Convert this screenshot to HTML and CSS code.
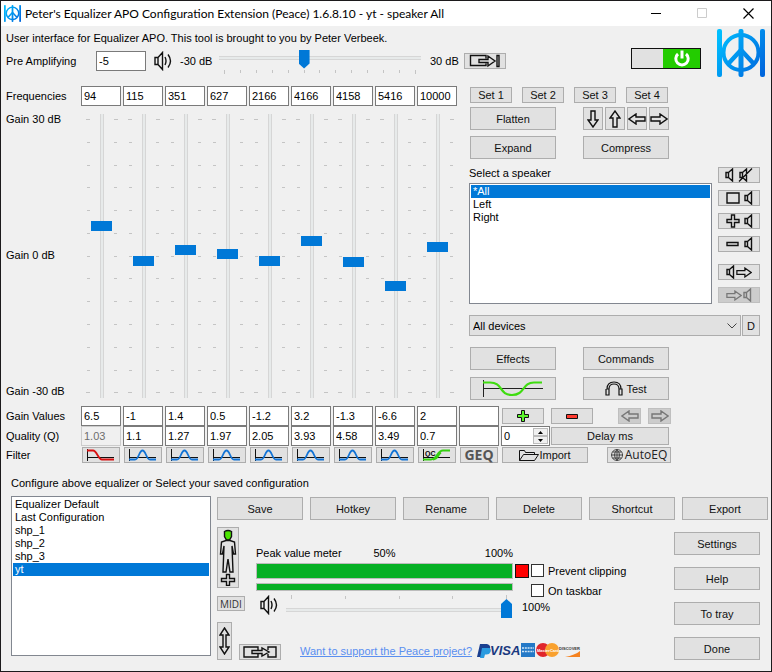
FILE: index.html
```html
<!DOCTYPE html>
<html lang="en">
<head>
    <meta charset="utf-8">
    <title>Peter's Equalizer APO Configuration Extension (Peace)</title>
    <link rel="stylesheet" href="styles.css">
</head>
<body>
    <!-- shared icons -->
    <svg class="defs" width="0" height="0" aria-hidden="true">
        <defs>
            <linearGradient id="blue" gradientUnits="userSpaceOnUse" x1="0" y1="8" x2="48" y2="40">
                <stop offset="0" stop-color="#00bfff"/>
                <stop offset="1" stop-color="#0066dd"/>
            </linearGradient>
            <symbol id="logo" viewBox="0 0 48 48">
                <g fill="url(#blue)">
                    <rect x="0" y="0" width="5" height="48" rx="2"/>
                    <rect x="43" y="0" width="5" height="48" rx="2"/>
                    <rect x="21.5" y="0" width="5" height="48" rx="2"/>
                </g>
                <circle cx="24" cy="23.5" r="17.5" fill="none" stroke="url(#blue)" stroke-width="4"/>
                <path d="M24 21 L11.5 34.500 M24 21 L36.500 34.500" fill="none" stroke="url(#blue)" stroke-width="4.500"/>
            </symbol>
            <symbol id="ticks" viewBox="0 0 40 284">
                <path fill="none" stroke="#c4c4c4" d="M5 5.500h4M33 5.500h4M6 28.500h3M33 28.500h3M6 51.500h3M33 51.500h3M6 73.500h3M33 73.500h3M6 96.500h3M33 96.500h3M6 119.500h3M33 119.500h3M6 142.500h3M33 142.500h3M6 164.500h3M33 164.500h3M6 187.500h3M33 187.500h3M6 210.500h3M33 210.500h3M6 233.500h3M33 233.500h3M6 256.500h3M33 256.500h3M5 278.500h4M33 278.500h4"/>
            </symbol>
            <symbol id="sound" viewBox="0 0 18 20">
                <path fill="none" stroke="#111" stroke-width="1.400" d="M1 6.500h3v7h-3zM4 6.500L8.500 1.500v17L4 13.500M11 6q2 4 0 8M14 3.500q5 6.500 0 13"/>
            </symbol>
            <symbol id="speaker" viewBox="0 0 9 14">
                <path fill="none" stroke="currentColor" stroke-width="1.400" d="M1 4.500h2.500v5H1zM3.500 4.500L7.500 1v12L3.500 9.500"/>
            </symbol>
            <symbol id="arrow-right" viewBox="0 0 18 12">
                <path fill="none" stroke="currentColor" stroke-width="1.400" d="M1 4h9V1l7 5-7 5V8H1z"/>
            </symbol>
            <symbol id="arrow-left" viewBox="0 0 18 12">
                <path fill="none" stroke="currentColor" stroke-width="1.400" d="M17 4H8V1L1 6l7 5V8h9z"/>
            </symbol>
            <symbol id="peak" viewBox="0 0 28 12">
                <path fill="none" stroke="#111" d="M.5 0v12M0 8.500h27"/>
                <path fill="none" stroke="#1173d6" stroke-width="1.800" d="M0 10.500h6c4 0 4-9 7.500-9s3.500 9 7.500 9h6"/>
            </symbol>
        </defs>
    </svg>

    <header class="titlebar">
        <svg class="appicon" width="17" height="17"><use href="#logo"/></svg>
        <h1>Peter's Equalizer APO Configuration Extension (Peace) 1.6.8.10 - yt - speaker All</h1>
        <button class="wbtn" aria-label="Minimize"><svg width="11" height="11"><path d="M0 5.500h10" stroke="#000"/></svg></button>
        <button class="wbtn" aria-label="Maximize" disabled><svg width="11" height="11"><path d="M.5 .5h9v9h-9z" fill="none" stroke="#ccc"/></svg></button>
        <button class="wbtn" aria-label="Close"><svg width="11" height="11"><path d="M.5 .5l10 10M10.500 .5l-10 10" stroke="#000" stroke-width="1.200"/></svg></button>
    </header>

    <main>
        <div class="top">
            <div class="intro">
                <p>User interface for Equalizer APO. This tool is brought to you by Peter Verbeek.</p>
                <div class="preamp">
                    <label for="preamp">Pre Amplifying</label>
                    <input type="text" class="cell" id="preamp" value="-5">
                    <svg class="ico" width="18" height="20"><use href="#sound"/></svg>
                    <span class="db">-30 dB</span>
                    <div class="hslide">
                        <input type="range" class="horz down" aria-label="Pre amplifying" min="-30" max="30" value="-5">
                        <svg class="hticks" width="202" height="4"><path fill="none" stroke="#c4c4c4" d="M5.500 0v4M21.500 0v3M37.500 0v3M53.500 0v3M69.500 0v3M85.500 0v3M100.500 0v3M116.500 0v3M132.500 0v3M148.500 0v3M164.500 0v3M180.500 0v3M196.500 0v4"/></svg>
                    </div>
                    <span class="db2">30 dB</span>
                    <button class="btn small" aria-label="Prevent clipping amplification">
                        <svg width="32" height="14"><path fill="none" stroke="#111" stroke-width="1.400" d="M17 9.500v2H1.500v-10H17v3M10 5.500h9V2l7 5-7 5V8.500h-9zM28 1.500h2v11h-2z"/></svg>
                    </button>
                </div>
            </div>
            <button class="power" aria-label="Equalizer on">
                <svg width="20" height="20" viewBox="0 0 20 20"><path fill="none" stroke="#fff" stroke-width="3" d="M6 5a6.200 6.200 0 1 0 8 0M10 1.500v8"/></svg>
            </button>
            <svg class="biglogo" width="48" height="48"><use href="#logo"/></svg>
        </div>

        <div class="upper">
            <div class="bands">
                <span class="lab">Frequencies</span>
                <input type="text" class="cell" aria-label="Frequency 1" value="94">
                <input type="text" class="cell" aria-label="Frequency 2" value="115">
                <input type="text" class="cell" aria-label="Frequency 3" value="351">
                <input type="text" class="cell" aria-label="Frequency 4" value="627">
                <input type="text" class="cell" aria-label="Frequency 5" value="2166">
                <input type="text" class="cell" aria-label="Frequency 6" value="4166">
                <input type="text" class="cell" aria-label="Frequency 7" value="4158">
                <input type="text" class="cell" aria-label="Frequency 8" value="5416">
                <input type="text" class="cell" aria-label="Frequency 9" value="10000">

                <div class="scale"><span>Gain 30 dB</span><span>Gain 0 dB</span><span>Gain -30 dB</span></div>
                <div class="band"><svg width="40" height="284"><use href="#ticks"/></svg><input type="range" class="vert" aria-label="Gain 1" min="-30" max="30" step="0.1" value="6.5"></div>
                <div class="band"><svg width="40" height="284"><use href="#ticks"/></svg><input type="range" class="vert" aria-label="Gain 2" min="-30" max="30" step="0.1" value="-1"></div>
                <div class="band"><svg width="40" height="284"><use href="#ticks"/></svg><input type="range" class="vert" aria-label="Gain 3" min="-30" max="30" step="0.1" value="1.4"></div>
                <div class="band"><svg width="40" height="284"><use href="#ticks"/></svg><input type="range" class="vert" aria-label="Gain 4" min="-30" max="30" step="0.1" value="0.5"></div>
                <div class="band"><svg width="40" height="284"><use href="#ticks"/></svg><input type="range" class="vert" aria-label="Gain 5" min="-30" max="30" step="0.1" value="-1.2"></div>
                <div class="band"><svg width="40" height="284"><use href="#ticks"/></svg><input type="range" class="vert" aria-label="Gain 6" min="-30" max="30" step="0.1" value="3.2"></div>
                <div class="band"><svg width="40" height="284"><use href="#ticks"/></svg><input type="range" class="vert" aria-label="Gain 7" min="-30" max="30" step="0.1" value="-1.3"></div>
                <div class="band"><svg width="40" height="284"><use href="#ticks"/></svg><input type="range" class="vert" aria-label="Gain 8" min="-30" max="30" step="0.1" value="-6.6"></div>
                <div class="band"><svg width="40" height="284"><use href="#ticks"/></svg><input type="range" class="vert" aria-label="Gain 9" min="-30" max="30" step="0.1" value="2"></div>
            </div>

            <div class="panel">
                <div class="sets">
                    <button class="btn small">Set 1</button>
                    <button class="btn small">Set 2</button>
                    <button class="btn small">Set 3</button>
                    <button class="btn small">Set 4</button>
                </div>
                <div class="pair">
                    <button class="btn">Flatten</button>
                    <div class="arrows">
                        <button class="btn sq" aria-label="Down"><svg width="12" height="18"><path fill="none" stroke="#111" stroke-width="1.400" d="M4 1h4v9h3l-5 7-5-7h3z"/></svg></button>
                        <button class="btn sq" aria-label="Up"><svg width="12" height="18"><path fill="none" stroke="#111" stroke-width="1.400" d="M4 17h4V8h3L6 1 1 8h3z"/></svg></button>
                        <button class="btn sq" aria-label="Left"><svg width="18" height="12"><use href="#arrow-left"/></svg></button>
                        <button class="btn sq" aria-label="Right"><svg width="18" height="12"><use href="#arrow-right"/></svg></button>
                    </div>
                </div>
                <div class="pair">
                    <button class="btn">Expand</button>
                    <button class="btn">Compress</button>
                </div>
                <div class="speakers">
                    <div class="speaker-list">
                        <label for="speaker-box">Select a speaker</label>
                        <select class="list" id="speaker-box" size="8">
                            <option selected>*All</option>
                            <option>Left</option>
                            <option>Right</option>
                        </select>
                    </div>
                    <div class="side">
                        <button class="btn small" aria-label="Mute speaker">
                            <svg width="9" height="14"><use href="#speaker"/></svg>
                            <svg width="15" height="14"><path fill="none" stroke="#111" stroke-width="1.400" d="M2 4.500h2.500v5H2zM4.500 4.500L8.500 1v12L4.500 9.500M1 13.500L14 .5"/></svg>
                        </button>
                        <button class="btn small" aria-label="Clear speaker">
                            <svg width="14" height="12"><path fill="none" stroke="#111" stroke-width="1.400" d="M1 1h12v10H1z"/></svg>
                            <svg width="9" height="14"><use href="#speaker"/></svg>
                        </button>
                        <button class="btn small" aria-label="Add speaker">
                            <svg width="14" height="14"><path fill="none" stroke="#111" stroke-width="1.400" d="M5.500 1h3v4.500H13v3H8.500V13h-3V8.500H1v-3h4.500z"/></svg>
                            <svg width="9" height="14"><use href="#speaker"/></svg>
                        </button>
                        <button class="btn small" aria-label="Remove speaker">
                            <svg width="14" height="6"><path fill="none" stroke="#111" stroke-width="1.400" d="M1 1.500h11v3H1z"/></svg>
                            <svg width="9" height="14"><use href="#speaker"/></svg>
                        </button>
                        <button class="btn small copy" aria-label="Copy speaker">
                            <svg width="9" height="14"><use href="#speaker"/></svg>
                            <svg width="16" height="11"><use href="#arrow-right"/></svg>
                        </button>
                        <button class="btn small paste" aria-label="Paste speaker" disabled>
                            <svg width="16" height="11"><use href="#arrow-right"/></svg>
                            <svg width="9" height="14"><use href="#speaker"/></svg>
                        </button>
                    </div>
                </div>
                <div class="devices">
                    <div class="combo">
                        <select aria-label="Devices"><option>All devices</option></select>
                        <svg width="10" height="6"><path fill="none" stroke="#444" d="M.5 .5l4.500 4.500 4.500-4.500"/></svg>
                    </div>
                    <button class="btn dbtn">D</button>
                </div>
                <div class="pair">
                    <button class="btn">Effects</button>
                    <button class="btn">Commands</button>
                </div>
                <div class="pair">
                    <button class="btn" aria-label="Graph">
                        <svg width="62" height="18"><path fill="none" stroke="#222" d="M1.500 0v17M1 8.500h60"/><path fill="none" stroke="#3fdc10" stroke-width="2.200" d="M1 2.500h7c13 0 9 12.500 22 12.500S40 2.500 52 2.500h8"/></svg>
                    </button>
                    <button class="btn test">
                        <svg width="18" height="15"><path fill="none" stroke="#111" stroke-width="1.200" d="M1 8v6h3V8H1.500M14 8v6h3V8h-3M2 8q0-7 7-7t7 7M4 8q0-5 5-5t5 5"/></svg>
                        Test
                    </button>
                </div>
            </div>
        </div>

        <div class="values">
            <span class="lab">Gain Values</span>
            <input type="text" class="cell" aria-label="Gain value 1" value="6.5">
            <input type="text" class="cell" aria-label="Gain value 2" value="-1">
            <input type="text" class="cell" aria-label="Gain value 3" value="1.4">
            <input type="text" class="cell" aria-label="Gain value 4" value="0.5">
            <input type="text" class="cell" aria-label="Gain value 5" value="-1.2">
            <input type="text" class="cell" aria-label="Gain value 6" value="3.2">
            <input type="text" class="cell" aria-label="Gain value 7" value="-1.3">
            <input type="text" class="cell" aria-label="Gain value 8" value="-6.6">
            <input type="text" class="cell" aria-label="Gain value 9" value="2">
            <input type="text" class="cell" aria-label="Gain value 10" value="">
            <div class="tools">
                <button class="btn small" aria-label="Add filter"><svg width="13" height="13"><path fill="#5cf62d" stroke="#111" d="M4.500 .5h3v4h4v3h-4v4h-3v-4h-4v-3h4z"/></svg></button>
                <button class="btn small" aria-label="Remove filter"><svg width="12" height="5"><path fill="#ff3b30" stroke="#111" d="M.5 .5h11v4H.5z"/></svg></button>
                <div class="shift">
                    <button class="btn" aria-label="Move left" disabled><svg width="18" height="12"><use href="#arrow-left"/></svg></button>
                    <button class="btn" aria-label="Move right" disabled><svg width="18" height="12"><use href="#arrow-right"/></svg></button>
                </div>
            </div>

            <span class="lab">Quality (Q)</span>
            <input type="text" class="cell" aria-label="Quality 1" value="1.03" disabled>
            <input type="text" class="cell" aria-label="Quality 2" value="1.1">
            <input type="text" class="cell" aria-label="Quality 3" value="1.27">
            <input type="text" class="cell" aria-label="Quality 4" value="1.97">
            <input type="text" class="cell" aria-label="Quality 5" value="2.05">
            <input type="text" class="cell" aria-label="Quality 6" value="3.93">
            <input type="text" class="cell" aria-label="Quality 7" value="4.58">
            <input type="text" class="cell" aria-label="Quality 8" value="3.49">
            <input type="text" class="cell" aria-label="Quality 9" value="0.7">
            <input type="text" class="cell" aria-label="Quality 10" value="">
            <div class="delay">
                <div class="spin">
                    <input type="text" aria-label="Delay" value="0">
                    <div class="updown">
                        <button aria-label="Up"><svg width="5" height="3"><path d="M0 3L2.500 0 5 3z"/></svg></button>
                        <button aria-label="Down"><svg width="5" height="3"><path d="M0 0h5L2.500 3z"/></svg></button>
                    </div>
                </div>
                <button class="btn">Delay ms</button>
            </div>

            <span class="lab">Filter</span>
            <button class="btn filter" aria-label="Low shelf"><svg width="28" height="12"><path fill="none" stroke="#111" d="M.5 0v12M0 8.500h27"/><path fill="none" stroke="#d81010" stroke-width="1.800" d="M0 1.500h6c4 0 5 9 9 9h12"/></svg></button>
            <button class="btn filter" aria-label="Peak 2"><svg width="28" height="12"><use href="#peak"/></svg></button>
            <button class="btn filter" aria-label="Peak 3"><svg width="28" height="12"><use href="#peak"/></svg></button>
            <button class="btn filter" aria-label="Peak 4"><svg width="28" height="12"><use href="#peak"/></svg></button>
            <button class="btn filter" aria-label="Peak 5"><svg width="28" height="12"><use href="#peak"/></svg></button>
            <button class="btn filter" aria-label="Peak 6"><svg width="28" height="12"><use href="#peak"/></svg></button>
            <button class="btn filter" aria-label="Peak 7"><svg width="28" height="12"><use href="#peak"/></svg></button>
            <button class="btn filter" aria-label="Peak 8"><svg width="28" height="12"><use href="#peak"/></svg></button>
            <button class="btn filter" aria-label="High shelf"><svg width="28" height="12"><path fill="none" stroke="#111" d="M.5 0v12M0 8.500h27"/><text class="qc" x="2" y="7">QC</text><path fill="none" stroke="#35d010" stroke-width="1.800" d="M0 10.500h8c6 0 6-9 12-9h7M10 10.500c5 0 5-5 8-7"/></svg></button>
            <button class="btn filter geq">GEQ</button>
            <div class="files">
                <button class="btn"><svg width="20" height="11"><path fill="none" stroke="#111" d="M.5 10.500v-10h5l1 2h9v2M.5 10.500l4-6h15l-4 6z"/></svg>Import</button>
                <button class="btn auto"><svg width="12" height="12"><path fill="none" stroke="#444" d="M6 .5a5.500 5.500 0 1 0 .1 0M6 .5v11M.5 6h11M6 .5q-5 5.500 0 11M6 .5q5 5.500 0 11M1.500 3h9M1.500 9h9"/></svg>AutoEQ</button>
            </div>
        </div>

        <div class="saved">
            <label for="configs">Configure above equalizer or Select your saved configuration</label>
            <div class="lower">
                <select class="list configs" id="configs" size="11">
                    <option>Equalizer Default</option>
                    <option>Last Configuration</option>
                    <option>shp_1</option>
                    <option>shp_2</option>
                    <option>shp_3</option>
                    <option selected>yt</option>
                </select>
                <div class="manage">
                    <div class="actions">
                        <button class="btn">Save</button>
                        <button class="btn">Hotkey</button>
                        <button class="btn">Rename</button>
                        <button class="btn">Delete</button>
                        <button class="btn">Shortcut</button>
                        <button class="btn">Export</button>
                    </div>
                    <div class="status">
                        <div class="output">
                            <div class="monitor">
                                <div class="icons">
                                    <button class="btn person" aria-label="Simple interface"><svg width="18" height="57" viewBox="0 0 18 57"><path fill="#4be600" stroke="#111" stroke-width="1.400" d="M5.500 2.500q3.500-2 7 0v5l-2 3.500h-3l-2-3.500z"/><path fill="none" stroke="#111" stroke-width="1.400" d="M7 11.500h4l4.500 1.500 1 12h-2L13 17l1 26h-3L9 30 7 43H4L5 17 3.500 25h-2L2.500 13zM7.500 45.500h3v4h5v3h-5v4h-3v-4h-5v-3h5z"/></svg></button>
                                    <button class="btn midi">MIDI</button>
                                </div>
                                <div class="peak">
                                    <div class="marks"><span>Peak value meter</span><span>50%</span><span>100%</span></div>
                                    <progress class="bar" aria-label="Peak" value="100" max="100"></progress>
                                    <progress class="bar thin" aria-label="Average" value="100" max="100"></progress>
                                    <div class="volume">
                                        <svg width="18" height="20"><use href="#sound"/></svg>
                                        <div class="vslide">
                                            <svg width="226" height="4"><path fill="none" stroke="#c4c4c4" d="M5.500 0v4M59.500 1v3M113.500 1v3M166.500 1v3M220.500 0v4"/></svg>
                                            <input type="range" class="horz up" aria-label="Volume" min="0" max="100" value="100">
                                        </div>
                                    </div>
                                </div>
                                <div class="checks">
                                    <div class="check"><i class="clip"></i><input type="checkbox" id="clip"><label for="clip">Prevent clipping</label></div>
                                    <div class="check second"><input type="checkbox" id="task"><label for="task">On taskbar</label></div>
                                    <span class="percent">100%</span>
                                </div>
                            </div>
                            <div class="support">
                                <button class="btn tall" aria-label="Resize"><svg width="11" height="28"><path fill="none" stroke="#111" stroke-width="1.400" d="M5.500 1L10 8H7v12h3l-4.500 7L1 20h3V8H1z"/></svg></button>
                                <button class="btn small" aria-label="Copy settings"><svg width="34" height="12"><path fill="none" stroke="#111" stroke-width="1.400" d="M15 8v3H1V1h14v3M9 4.500h10V2l7 4-7 4V7.500H9zM25 4V1h8v10h-8V8"/></svg></button>
                                <a href="#">Want to support the Peace project?</a>
                                <svg class="cards" width="104" height="16" viewBox="0 0 104 16">
                                    <path fill="#1a3f8f" d="M3 1h7q4 1 3 5-1 3-5 3.500H6L4.500 14H0z"/>
                                    <path fill="#2a9be0" d="M5 5h7.500q2 1 1 4-1 2.500-4 2.500H8L7 15H3z"/>
                                    <text class="visa" x="13" y="12">VISA</text>
                                    <rect x="44" y="0" width="14" height="14" fill="#2479c7"/>
                                    <path fill="none" stroke="#cfe6f7" stroke-width="1.500" stroke-dasharray="2 .8" d="M45 5h12M45 8.500h12"/>
                                    <circle cx="66" cy="7" r="7" fill="#e0262b"/>
                                    <circle cx="75" cy="7" r="7" fill="#f9a12e"/>
                                    <text class="master" x="60" y="9">MasterCard</text>
                                    <text class="disc" x="82" y="7">DISCOVER</text>
                                    <path fill="#f58220" d="M88 14q10-2 15-6v6z"/>
                                </svg>
                            </div>
                        </div>
                        <div class="menu">
                            <button class="btn">Settings</button>
                            <button class="btn">Help</button>
                            <button class="btn">To tray</button>
                            <button class="btn">Done</button>
                        </div>
                    </div>
                </div>
            </div>
        </div>
    </main>
</body>
</html>
```
FILE: styles.css
```css
* {
    box-sizing: border-box;
}
body {
    margin: 0;
    min-height: 100vh;
    border: 1px solid #1c1a1c;
    background: #f0f0f0;
    color: #000;
    font: 11px/14px "Liberation Sans", Arial, sans-serif;
}
button, input, select {
    margin: 0;
    font: inherit;
    color: inherit;
    border-radius: 0;
}
p, h1 {
    margin: 0;
}
svg {
    display: block;
    flex: none;
}
.defs {
    position: absolute;
}

/* title bar */
.titlebar {
    display: flex;
    align-items: center;
    height: 25px;
    padding-left: 3px;
    background: #fff;
}
.titlebar h1 {
    flex: 1;
    margin-left: 4px;
    font: 12px/16px Lato, "Open Sans", sans-serif;
    white-space: nowrap;
}
.wbtn {
    display: flex;
    align-items: center;
    justify-content: center;
    width: 46px;
    height: 25px;
    padding: 0;
    border: 0;
    background: none;
}

/* common controls */
.btn {
    display: flex;
    align-items: center;
    justify-content: center;
    width: 86px;
    height: 23px;
    padding: 0;
    border: 1px solid #adadad;
    background: #e1e1e1;
    color: #111;
    white-space: nowrap;
}
.btn:disabled {
    border-color: #bfbfbf;
    background: #ccc;
    color: #777;
}
.small {
    width: 42px;
    height: 16px;
}
.cell {
    width: 100%;
    height: 20px;
    padding: 0 0 0 2px;
    border: 1px solid #7a7a7a;
    background: #fff;
}
.cell:disabled {
    border-color: #ccc;
    background: #f0f0f0;
    color: #6d6d6d;
}
.list {
    display: block;
    width: 100%;
    padding: 1px;
    border: 1px solid #828790;
    background: #fff;
    overflow: hidden;
    outline: 0;
}
.list option {
    height: 13px;
    min-height: 13px;
    padding: 0 2px;
    line-height: 13px;
}
.list option:checked {
    background: #0078d7 linear-gradient(#0078d7, #0078d7);
    color: #fff;
    -webkit-text-fill-color: #fff;
}

/* sliders */
.horz, .vert {
    -webkit-appearance: none;
    appearance: none;
    display: block;
    outline: 0;
}
.horz {
    width: 100%;
    height: 19px;
    background: linear-gradient(#d6d6d6 1px, #e7eaea 1px, #e7eaea 3px, #d6d6d6 3px) no-repeat;
    background-size: 100% 4px;
}
.down {
    background-position: 0 6px;
}
.up {
    background-position: 0 9px;
}
.horz::-webkit-slider-thumb {
    -webkit-appearance: none;
    width: 11px;
    height: 19px;
    background: #0078d7;
}
.down::-webkit-slider-thumb {
    clip-path: polygon(0 0, 100% 0, 100% 14px, 50% 100%, 0 14px);
}
.up::-webkit-slider-thumb {
    clip-path: polygon(0 5px, 50% 0, 100% 5px, 100% 100%, 0 100%);
}
.vert {
    writing-mode: vertical-lr;
    direction: rtl;
    width: 21px;
    height: 284px;
    background: linear-gradient(90deg, #d6d6d6 1px, #e7eaea 1px, #e7eaea 3px, #d6d6d6 3px) no-repeat 9px 0;
    background-size: 4px 100%;
}
.vert::-webkit-slider-thumb {
    -webkit-appearance: none;
    width: 21px;
    height: 10px;
    background: #0078d7;
}

/* pre amplifying */
.top {
    display: flex;
    align-items: flex-start;
    padding: 3px 6px 0 5px;
}
.intro {
    flex: 1;
    padding-top: 2px;
}
.preamp {
    display: flex;
    align-items: center;
    height: 20px;
    margin-top: 6px;
    white-space: nowrap;
}
.preamp label {
    width: 90px;
}
.preamp .cell {
    width: 50px;
}
.ico {
    margin-left: 8px;
}
.db {
    width: 39px;
    margin-left: 8px;
}
.hslide {
    width: 202px;
    height: 23px;
}
.hticks {
    margin-top: 1px;
}
.db2 {
    width: 28px;
    margin: 0 6px 0 9px;
}
.power {
    display: flex;
    justify-content: flex-end;
    width: 70px;
    height: 21px;
    margin: 19px 16px 0 0;
    padding: 0;
    border: 1px solid #111;
    background: linear-gradient(90deg, #e1e1e1 31px, #23cc00 31px);
}
.power svg {
    margin-right: 8px;
}

/* equalizer */
.upper {
    display: flex;
    gap: 12px;
    padding: 9px 0 0 5px;
}
.bands {
    display: grid;
    grid-template-columns: 73px repeat(9, 40px);
    grid-template-rows: 20px 286px;
    gap: 6px 2px;
    align-content: start;
}
.lab {
    align-self: center;
}
.scale {
    display: flex;
    flex-direction: column;
    justify-content: space-between;
}
.band {
    display: grid;
    align-self: end;
}
.band > * {
    grid-area: 1 / 1;
}
.band .vert {
    margin-left: 10px;
}
.panel {
    flex: 1;
    padding: 1px 11px 0 0;
}
.sets {
    display: flex;
    gap: 10px;
    padding-left: 1px;
}
.pair {
    display: flex;
    gap: 27px;
    margin-top: 7px;
    padding-left: 1px;
}
.sets + .pair {
    margin-top: 4px;
}
.sets + .pair + .pair {
    margin-top: 6px;
}
.arrows {
    display: flex;
    gap: 2px;
}
.sq {
    width: 20px;
}
.test {
    gap: 3px;
}
.speakers {
    display: flex;
    gap: 6px;
    margin-top: 7px;
}
.speaker-list {
    flex: 1;
}
.speaker-list label {
    display: block;
    margin-bottom: 3px;
}
.speaker-list .list {
    height: 121px;
}
.side {
    display: flex;
    flex-direction: column;
    gap: 7px;
    padding-top: 1px;
}
.side .btn {
    gap: 4px;
}
.side .copy {
    margin-top: 5px;
}
.side .copy, .side .paste {
    gap: 1px;
}
.devices {
    display: flex;
    gap: 1px;
    margin: 11px 0;
}
.combo {
    flex: 1;
    display: grid;
    align-items: center;
}
.combo > * {
    grid-area: 1 / 1;
}
.combo select {
    -webkit-appearance: none;
    appearance: none;
    height: 21px;
    padding: 0 3px;
    border: 1px solid #adadad;
    background: #e1e1e1;
}
.combo svg {
    justify-self: end;
    margin-right: 4px;
    pointer-events: none;
}
.dbtn {
    width: 18px;
    height: 21px;
}

/* values table */
.values {
    display: grid;
    grid-template-columns: 73px repeat(10, 40px) 1fr;
    grid-template-rows: 20px 20px 18px;
    column-gap: 2px;
    padding: 6px 0 0 5px;
}
.tools, .files {
    display: flex;
    align-items: center;
    padding-left: 1px;
}
.tools {
    gap: 7px;
}
.shift {
    display: flex;
    gap: 7px;
    margin-left: 18px;
}
.shift .btn {
    width: 23px;
    height: 16px;
}
.delay {
    display: flex;
    align-items: center;
    gap: 1px;
}
.delay > .btn {
    width: 118px;
    height: 18px;
}
.spin {
    display: flex;
    width: 49px;
    height: 20px;
    padding: 1px;
    border: 1px solid #7a7a7a;
    background: #fff;
}
.spin input {
    flex: 1;
    width: 10px;
    padding: 0 0 0 1px;
    border: 0;
}
.updown {
    display: flex;
    flex-direction: column;
    width: 15px;
}
.updown button {
    display: flex;
    flex: 1;
    align-items: center;
    justify-content: center;
    padding: 0;
    border: 1px solid #bbb;
    background: #f0f0f0;
}
.filter {
    align-self: center;
    width: 38px;
    height: 16px;
    margin-left: 1px;
}
.qc {
    font: bold 7px "Liberation Sans", sans-serif;
}
.geq {
    color: #555;
    font: bold 14px/14px "Open Sans", sans-serif;
}
.files .btn {
    height: 16px;
}
.files .auto {
    width: 64px;
    gap: 2px;
    margin-left: 19px;
    color: #222;
    font: 12px/14px "Open Sans", sans-serif;
}

/* saved configurations */
.saved {
    padding: 12px 3px 0 10px;
}
.saved > label {
    display: block;
}
.lower {
    display: flex;
    gap: 6px;
    margin-top: 6px;
}
.configs {
    width: 200px;
    height: 160px;
}
.manage {
    flex: 1;
    padding-top: 1px;
}
.actions {
    display: flex;
    justify-content: space-between;
}
.status {
    display: flex;
    justify-content: space-between;
    padding: 7px 8px 0 0;
}
.monitor {
    display: flex;
}
.icons {
    width: 39px;
}
.person {
    width: 22px;
    height: 61px;
}
.midi {
    width: 28px;
    height: 15px;
    margin-top: 8px;
    color: #333;
    font: 10px/12px "Open Sans", sans-serif;
}
.peak {
    width: 257px;
    padding-top: 19px;
}
.marks {
    display: grid;
    grid-template-columns: 1fr auto 1fr;
}
.marks span:last-child {
    text-align: right;
}
.bar {
    -webkit-appearance: none;
    appearance: none;
    display: block;
    width: 100%;
    height: 16px;
    margin-top: 3px;
    border: 1px solid #bcbcbc;
}
.thin {
    height: 8px;
    margin-top: 4px;
}
.bar::-webkit-progress-bar {
    background: #e6e6e6;
}
.bar::-webkit-progress-value {
    background: #06b025;
}
.volume {
    display: flex;
    justify-content: space-between;
    margin-top: 4px;
    padding: 0 1px 0 4px;
}
.vslide {
    width: 226px;
}
.checks {
    padding: 36px 0 0 2px;
}
.check {
    display: flex;
    align-items: center;
    height: 15px;
}
.clip {
    width: 14px;
    height: 14px;
    margin-right: 2px;
    border: 1px solid #111;
    background: #f00;
}
.check input {
    -webkit-appearance: none;
    appearance: none;
    width: 13px;
    height: 13px;
    margin-right: 4px;
    border: 1px solid #333;
    background: #fff;
}
.second {
    margin: 5px 0 2px;
    padding-left: 16px;
}
.percent {
    display: block;
    padding-left: 7px;
}
.support {
    display: flex;
    align-items: flex-end;
    margin-top: 4px;
}
.tall {
    width: 15px;
    height: 38px;
    margin-right: 7px;
}
.support a {
    margin: 0 5px 2px 19px;
    color: #5a8ff0;
}
.visa {
    fill: #1b3a80;
    font: italic bold 13px "Liberation Sans", sans-serif;
}
.master {
    fill: #fff;
    font: bold 4px "Liberation Sans", sans-serif;
}
.disc {
    fill: #333;
    font: bold 4px "Liberation Sans", sans-serif;
}
.cards {
    margin-bottom: 1px;
}
.menu {
    display: flex;
    flex-direction: column;
    gap: 12px;
    padding-top: 5px;
}
```
